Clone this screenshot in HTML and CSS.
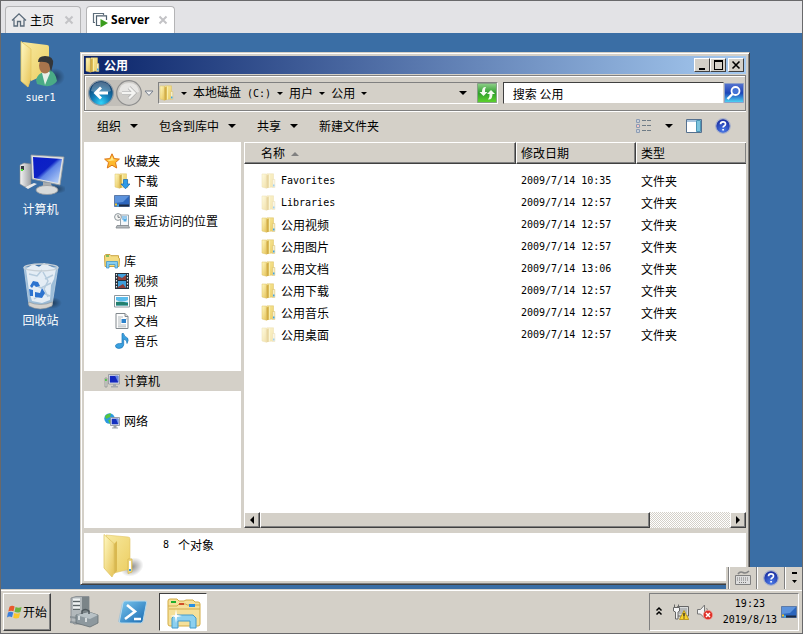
FILE: index.html
```html
<!DOCTYPE html>
<html lang="zh-CN">
<head>
    <meta charset="UTF-8">
    <meta name="viewport" content="width=device-width, initial-scale=1.0">
    <title>Server</title>
    <link rel="stylesheet" href="styles.css">
</head>
<body>
    <svg class="defs" aria-hidden="true">
        <defs>
            <linearGradient id="gold" x1="0" y1="0" x2="1" y2="1">
                <stop offset="0" stop-color="#fff9c4"/>
                <stop offset="1" stop-color="#e6c356"/>
            </linearGradient>
            <linearGradient id="goldDark" x1="0" y1="0" x2="1" y2="1">
                <stop offset="0" stop-color="#f7e9a0"/>
                <stop offset="1" stop-color="#ecce62"/>
            </linearGradient>
            <linearGradient id="screen" x1="0" y1="0" x2="1" y2="1">
                <stop offset="0" stop-color="#0a1cc8"/>
                <stop offset="0.45" stop-color="#0d22c4"/>
                <stop offset="0.55" stop-color="#5f86e6"/>
                <stop offset="1" stop-color="#c4dcfa"/>
            </linearGradient>
            <linearGradient id="silver" x1="0" y1="0" x2="1" y2="0">
                <stop offset="0" stop-color="#f4f4f4"/>
                <stop offset="1" stop-color="#9b9ea2"/>
            </linearGradient>
            <radialGradient id="shadow">
                <stop offset="0" stop-color="#000" stop-opacity=".45"/>
                <stop offset="1" stop-color="#000" stop-opacity="0"/>
            </radialGradient>
            <radialGradient id="backBlue" cx="0.5" cy="0.9" r="0.8">
                <stop offset="0" stop-color="#2fd4fa"/>
                <stop offset="0.45" stop-color="#1480ba"/>
                <stop offset="1" stop-color="#0c3a68"/>
            </radialGradient>
            <radialGradient id="helpBlue" cx="0.5" cy="0.8" r="0.8">
                <stop offset="0" stop-color="#4b7be8"/>
                <stop offset="1" stop-color="#14259a"/>
            </radialGradient>
            <linearGradient id="lens" x1="0" y1="0" x2="0" y2="1">
                <stop offset="0" stop-color="#5573cf"/>
                <stop offset="0.5" stop-color="#1c45b8"/>
                <stop offset="1" stop-color="#4fd8f6"/>
            </linearGradient>
            <linearGradient id="green" x1="0" y1="0" x2="0" y2="1">
                <stop offset="0" stop-color="#8fd08a"/>
                <stop offset="0.5" stop-color="#2f9e2c"/>
                <stop offset="1" stop-color="#5fd52c"/>
            </linearGradient>
            <linearGradient id="sky" x1="0" y1="0" x2="1" y2="1">
                <stop offset="0" stop-color="#7cc8ef"/>
                <stop offset="1" stop-color="#1567b0"/>
            </linearGradient>
        </defs>
        <symbol id="folder" viewBox="0 0 16 16">
            <path d="M6 .8h6.500V14L6 14.500z" fill="url(#goldDark)" stroke="#dcc063" stroke-width=".5"/>
            <path d="M1 1h4.500v14.200L1 14z" fill="url(#gold)" stroke="#dcc063" stroke-width=".5"/>
            <path d="M5.500 2.500 8 1.500v13l-2.500 1z" fill="#d3ae45"/>
            <path d="M8.300 1.500V14.500" stroke="#fbf2b4" stroke-width="1"/>
            <path d="M11.500 6.500h2.300v8h-2.300z" fill="#f6efc8" stroke="#d8bd66" stroke-width=".5"/>
            <path d="M12 11.500h1.500v2H12z" fill="#3fa4e4"/>
        </symbol>
        <symbol id="bigfolder" viewBox="0 0 48 48">
            <ellipse cx="36" cy="34" rx="12" ry="9" fill="url(#shadow)" transform="rotate(-25 36 34)"/>
            <path d="m10 2 22 2q2 0 2 2v30l-16 4z" fill="url(#goldDark)" stroke="#e0c566" stroke-width=".6"/>
            <path d="m18 11 3-3v30l-3 3z" fill="#d9b850"/>
            <path d="m8 1.500 10 9V40l-2 4-8-9z" fill="url(#gold)" stroke="#e0c566" stroke-width=".8"/>
            <path d="M32 26h4v13l-4 1.500z" fill="#f0dc8c" stroke="#d9b94e" stroke-width=".8"/>
            <path d="M33 28h2v8h-2z" fill="#fff"/>
            <path d="M33 36h2v2h-2z" fill="#3b9be0"/>
        </symbol>
        <symbol id="pc" viewBox="0 0 48 48">
            <ellipse cx="38" cy="38" rx="12" ry="5" fill="url(#shadow)"/>
            <path d="m3 14 4-2 7 1v21l-6 2-5-3z" fill="url(#silver)" stroke="#85898d" stroke-width=".6"/>
            <path d="M4 15h3v4H4z" fill="#33383d"/>
            <path d="M4 18h2v2H4z" fill="#4be535"/>
            <path d="m8 36 9-4 3 1-9 5z" fill="#e9e9e9"/>
            <path d="m14 4 33 2-4 28-28-6z" fill="#dfe2e2" stroke="#94999d" stroke-width=".8"/>
            <path d="m16 6 29 2-4 24-24-5z" fill="url(#screen)"/>
            <path d="m26 31 8 1 1 5h-9z" fill="#a9acae"/>
            <ellipse cx="30" cy="39" rx="11" ry="4.500" fill="#d8dada" stroke="#989b9d" stroke-width=".8"/>
        </symbol>
        <symbol id="smallpc" viewBox="0 0 16 16">
            <path d="M1 5h2v9H1z" fill="#d6d9d4" stroke="#868b86" stroke-width=".7"/>
            <path d="M1.200 6h1.500v2H1.200z" fill="#38c832"/>
            <path d="M4.500 1.500h11v9.500h-11z" fill="#e6e8ec" stroke="#8b9096" stroke-width=".8"/>
            <path d="M5.800 2.800h8.500v6.800H5.800z" fill="#1428be"/>
            <path d="m11 2.800 3.300 0v6.800z" fill="#6686df"/>
            <path d="M9 11h3v2H9zM7 13h7v1.500H7z" fill="#a4a8ad"/>
        </symbol>
        <symbol id="desktop" viewBox="0 0 16 16">
            <path d="M.5 2.500h15v11H.5z" fill="#2c66bd" stroke="#5d7ba8"/>
            <path d="M1 3h14l-6 6-8 1z" fill="#5d93dc"/>
            <path d="M5 11.500h10v2H5z" fill="#1c2b42"/>
            <path d="M1 10.500h2v2H1z" fill="#efc52f"/>
            <path d="M3 11.500h2v2H3z" fill="#3fa7e8"/>
        </symbol>
        <symbol id="help" viewBox="0 0 16 16">
            <circle cx="8" cy="8" r="7.300" fill="url(#helpBlue)" stroke="#a9b2cc" stroke-width="1.200"/>
            <path d="M5.500 6.300Q5.600 3.900 8 3.900q2.500 0 2.500 2.100 0 1.300-1.400 2-1 .6-1 1.600M8.100 11v1.600" fill="none" stroke="#fff" stroke-width="1.700"/>
        </symbol>
        <symbol id="close" viewBox="0 0 10 10">
            <path d="m1.500 1.500 7 7m0-7-7 7" stroke="#c3c3c6" stroke-width="2"/>
        </symbol>
    </svg>

    <div class="tabs">
        <div class="tab">
            <svg class="i16" viewBox="0 0 16 16"><path d="M1 8.500 8 1.800l7 6.700M3 7.500V14h3.500V9.500h3V14H13V7.500" fill="none" stroke="#5b6b7a" stroke-width="1.300"/></svg>
            <span>主页</span>
            <button class="tab-close" aria-label="关闭主页"><svg class="i10"><use href="#close"/></svg></button>
        </div>
        <div class="tab active">
            <svg class="i16" viewBox="0 0 16 16"><path d="M3 10.500H1.500v-9h10V3" fill="none" stroke="#5f6f7c" stroke-width="1.200"/><path d="M14.500 8V3.800h-10v9.700H8" fill="none" stroke="#4e5f6d" stroke-width="1.200"/><path d="M8.500 7v8.500L16 11z" fill="#3a9c1c"/></svg>
            <span>Server</span>
            <button class="tab-close" aria-label="关闭 Server"><svg class="i10"><use href="#close"/></svg></button>
        </div>
    </div>

    <div class="desktop">
        <div class="shortcuts">
            <a class="shortcut" href="#">
                <svg class="i48" viewBox="0 0 48 48">
                    <ellipse cx="38" cy="37" rx="10" ry="9" fill="url(#shadow)"/>
                    <path d="m6 2 24 3q2 0 2 2v26l-18 8z" fill="url(#goldDark)"/>
                    <path d="M4 1.500 14 9v29l-3 9-7-6z" fill="url(#gold)" stroke="#e5c862" stroke-width=".8"/>
                    <path d="m20 44-1-4q2-7 8-8l6-2q6 3 7 11-4 6-12 5z" fill="#4aab86"/>
                    <path d="m25 33 3 12 5-12-2-3h-5z" fill="#e6efe8"/>
                    <ellipse cx="28" cy="25.500" rx="6" ry="8" fill="#a8744c"/>
                    <path d="M21 22q0-6 7-6 9 0 8 8l-2 8-2-8q-3-3-11-2z" fill="#343638"/>
                </svg>
                <span class="latin">suer1</span>
            </a>
            <a class="shortcut" href="#">
                <svg class="i48"><use href="#pc"/></svg>
                <span>计算机</span>
            </a>
            <a class="shortcut" href="#">
                <svg class="i48" viewBox="0 0 48 48">
                    <ellipse cx="35" cy="41" rx="10" ry="6" fill="url(#shadow)"/>
                    <path d="m7 5 5 38q11 6 23 0l6-38z" fill="#aecbe2" opacity=".85" stroke="#d5e3ed" stroke-width=".8"/>
                    <path d="m9 7 7-5 6 3 5-4 12 6-2 10-3 6-1 15-8 3-10-2-3-10z" fill="#e4edf5"/>
                    <path d="m12 12 8 2 5-6m3 9 8-4m-20 9 8 4 10-5m-17 16 9-6 7 3M26 10l5 9-4 8 4 8" fill="none" stroke="#b5cbdd" stroke-width="1.500"/>
                    <ellipse cx="24" cy="5.500" rx="17" ry="3.500" fill="none" stroke="#c8d0d6" stroke-width="1.300"/>
                    <path d="m13 24 3-5 5 1 2 4-4 1-2-2-2 3zM12 27l4 1 0 6-3 0zM18 30l5 1 2-5 3 5-3 5-7-1z" fill="#2c73cf"/>
                    <path d="m11.500 40 .5 4q11 6 23 0l.5-4q-12 5-24 0z" fill="#d3d1cd" stroke="#8f9396" stroke-width=".6"/>
                </svg>
                <span>回收站</span>
            </a>
        </div>

        <div class="window">
            <div class="titlebar">
                <svg class="i16"><use href="#folder"/></svg>
                <h1>公用</h1>
                <div class="controls">
                    <button class="ctl" aria-label="最小化"><svg class="i12" viewBox="0 0 12 12"><path d="M3 9h6v2H3z"/></svg></button>
                    <button class="ctl" aria-label="最大化"><svg class="i12" viewBox="0 0 12 12"><path d="M2 1h9v10H2zM3 3v7h7V3z" fill-rule="evenodd"/></svg></button>
                    <button class="ctl last" aria-label="关闭"><svg class="i12" viewBox="0 0 12 12"><path d="m2.500 2.500 7 7m0-7-7 7" stroke="#000" stroke-width="1.600"/></svg></button>
                </div>
            </div>

            <div class="navbar">
                <div class="history">
                    <button aria-label="后退"><svg class="i26" viewBox="0 0 26 26"><circle cx="13" cy="13" r="12.300" fill="url(#backBlue)" stroke="#8d99a5" stroke-width="1.200"/><path d="M3 11q1-9 10-9t10 9q-9 4-20 0z" fill="#fff" opacity=".28"/><path d="M20 13H8m5-5.500L7.500 13l5.500 5.500" fill="none" stroke="#fff" stroke-width="2.800"/></svg></button>
                    <button aria-label="前进"><svg class="i26" viewBox="0 0 26 26"><circle cx="13" cy="13" r="12.300" fill="#cfcdc9" stroke="#8e8e8e" stroke-width="1.200"/><path d="M3 12q1-9 10-9t10 9q-9 3-20 0z" fill="#fff" opacity=".5"/><path d="M6 13h12m-5-5.500 5.500 5.500-5.500 5.500" fill="none" stroke="#aaa" stroke-width="3.600"/><path d="M6 13h12m-5-5.500 5.500 5.500-5.500 5.500" fill="none" stroke="#f4f4f2" stroke-width="2.400"/></svg></button>
                    <button aria-label="最近浏览"><svg class="i10" viewBox="0 0 10 10"><path d="M1 3h8L5 7.500z" fill="#f1f1f1" stroke="#777f8c"/></svg></button>
                </div>
                <div class="address">
                    <svg class="i16"><use href="#folder"/></svg>
                    <nav class="crumbs">
                        <i class="arrow small"></i>
                        <a href="#">本地磁盘<span class="latin drive">(C:)</span></a>
                        <i class="arrow small"></i>
                        <a href="#">用户</a>
                        <i class="arrow small"></i>
                        <a href="#">公用</a>
                        <i class="arrow small"></i>
                    </nav>
                    <button class="history-list" aria-label="以前的位置"><i class="arrow"></i></button>
                    <button class="refresh" aria-label="刷新"><svg class="i20" viewBox="0 0 20 20"><path d="M.5.5h19v19H.5z" fill="url(#green)" stroke="#86a286"/><path d="M9 4Q5 3.500 5 9H2.500L6.500 13l4-4H8q-.5-3 1-5zM11 16.500q4.500.5 4.500-5.500H18l-4-4-4 4h2.500q.5 3-1.500 5.500z" fill="#f5fbf2"/></svg></button>
                </div>
                <form class="search">
                    <input type="text" aria-label="搜索" placeholder="搜索 公用">
                    <button type="button" aria-label="开始搜索"><svg class="i20" viewBox="0 0 20 20"><path d="M.5.5h19v19H.5z" fill="url(#lens)" stroke="#8ea0c8"/><circle cx="11.500" cy="8" r="4" fill="#4473d6" stroke="#fff" stroke-width="1.800"/><path d="m8.500 11-5 5" stroke="#fff" stroke-width="2.400"/></svg></button>
                </form>
            </div>

            <div class="toolbar">
                <button>组织<i class="arrow"></i></button>
                <button>包含到库中<i class="arrow"></i></button>
                <button>共享<i class="arrow"></i></button>
                <button>新建文件夹</button>
                <div class="view-tools">
                    <button aria-label="更改视图"><svg class="i16" viewBox="0 0 16 16"><path d="M.5 1.500h3v3h-3zM.5 6.500h3v3h-3zM.5 11.500h3v3h-3z" fill="#fff" stroke="#8c9cb4"/><path d="M1.500 2.500h1v1h-1zM1.500 12.500h1v1h-1z" fill="#346"/><path d="M1.500 7.500h1v1h-1z" fill="#d22"/><path d="M6 2.500h4M11 2.500h4M6 7.500h4M11 7.500h4M6 12.500h4M11 12.500h4" stroke="#6f7c86"/></svg></button>
                    <button aria-label="更多选项"><i class="arrow"></i></button>
                    <button aria-label="显示预览窗格"><svg class="i16" viewBox="0 0 16 16"><path d="M.5 1.500h15v13H.5z" fill="#fff" stroke="#55708f"/><path d="M1 2h9v2H1z" fill="#a9c4de"/><path d="M10.500 2.500h4v11h-4z" fill="#7cc3dc" stroke="#4b95b5"/></svg></button>
                    <button aria-label="获取帮助"><svg class="i16"><use href="#help"/></svg></button>
                </div>
            </div>

            <div class="panes">
                <nav class="tree">
                    <ul>
                        <li><a href="#"><svg class="i16" viewBox="0 0 16 16"><path d="m8 .8 2.200 4.800 5.200.5-3.900 3.500 1.200 5.400L8 12.200 3.300 15l1.200-5.400L.6 6.100l5.200-.5z" fill="#fdb92d" stroke="#dd7618"/><path d="m8 3 1.300 3.500 3 .5-7 1L3 7l3.500-.5z" fill="#ffe98a"/></svg>收藏夹</a></li>
                        <li class="child"><a href="#"><svg class="i16"><use href="#folder"/><path d="M9.500 6.500h4V11H16l-4.500 4.800L7 11h2.500z" fill="#2f9be8" stroke="#1267b6" stroke-width=".7"/></svg>下载</a></li>
                        <li class="child"><a href="#"><svg class="i16"><use href="#desktop"/></svg>桌面</a></li>
                        <li class="child"><a href="#"><svg class="i16" viewBox="0 0 16 16"><path d="M6.500 2h8v11h-8z" fill="#f4f7fa" stroke="#98a4ac"/><path d="M8 4h5M8 6h2M12 6h1" stroke="#3c9bdf"/><path d="M9.500 5.500h3v3h-3z" fill="#56aee4"/><path d="M3 12.500h11.500l1 2.500H2z" fill="#b7bcbf" stroke="#80878b" stroke-width=".8"/><circle cx="4" cy="4" r="3.400" fill="#f6f6f4" stroke="#8d969c"/><path d="M4 2v2.300h2" fill="none" stroke="#586269" stroke-width=".8"/></svg>最近访问的位置</a></li>
                    </ul>
                    <ul>
                        <li><a href="#"><svg class="i16" viewBox="0 0 16 16"><path d="M.5 2.500 2 1.500h4l1 1.200h7.500V5l1 .5-.5 8H1z" fill="#f4dc82" stroke="#c9a342"/><path d="M2 3h3" stroke="#35aa4a" stroke-width="1.200"/><path d="M2.500 15V8.500h11V15H11v-3.500H5V15z" fill="#86cdf1" stroke="#3f96cc" stroke-width=".8"/></svg>库</a></li>
                        <li class="child"><a href="#"><svg class="i16" viewBox="0 0 16 16"><path d="M1 0h14v16H1z" fill="#26303a"/><path d="M4 1h8v6H4zM4 8h8v7H4z" fill="#3f9fdc"/><path d="m4 3 4 2 4-3v5H4zM4 14l5-3 3 4H4z" fill="#8e3f3a"/><path d="M2.500 1v14M13.500 1v14" stroke="#e6e9eb" stroke-width="1.200" stroke-dasharray="1.500 1.500"/></svg>视频</a></li>
                        <li class="child"><a href="#"><svg class="i16" viewBox="0 0 16 16"><path d="M.5 2.500h15v11.500H.5z" fill="#fff" stroke="#8d979e"/><path d="M2 4h12v8.500H2z" fill="#5bbcec"/><path d="M2 7q6 3 12 0v2H2z" fill="#dff2f7"/><path d="M2 9q6-1 12 1v2.500H2z" fill="#23806f"/></svg>图片</a></li>
                        <li class="child"><a href="#"><svg class="i16" viewBox="0 0 16 16"><path d="M2 .5h9l3 3v12H2z" fill="#fdfdfd" stroke="#82898e"/><path d="M11 .5v3h3" fill="#ddd" stroke="#82898e"/><path d="M4 4h5M4 6h3M4 8h3M4 10h3M4 12h8M12 6h1M4 13.800h8" stroke="#a0a8ad" stroke-width=".8"/><path d="M7.500 6h4.500v4H7.500z" fill="#2d82cb"/></svg>文档</a></li>
                        <li class="child"><a href="#"><svg class="i16" viewBox="0 0 16 16"><path d="M8 .5h1.500q.5 3 4 4.500 1.500 2-.5 5.500.3-3.500-3.300-4.500V12q-.7 3.500-5 3.500Q1 15 1.500 12.500 2.500 10 8 10.500z" fill="#3aa0df" stroke="#1b76b8" stroke-width=".7"/></svg>音乐</a></li>
                    </ul>
                    <ul>
                        <li class="selected"><a href="#"><svg class="i16"><use href="#smallpc"/></svg>计算机</a></li>
                    </ul>
                    <ul>
                        <li><a href="#"><svg class="i16" viewBox="0 0 16 16"><circle cx="5.500" cy="5.500" r="5.200" fill="#2a9ae0"/><path d="M1 3q3-3 6-2.500L6 4 2 6zM4 7l4-1 1 3-3 2z" fill="#56c53e"/><path d="M6.500 4.500h9v8h-9z" fill="#e4e8ee" stroke="#858d97" stroke-width=".8"/><path d="M7.700 5.700h6.600v5.600H7.700z" fill="#1530bf"/><path d="M12 5.700h2.300v5.600z" fill="#6d94e7"/><path d="M9.500 13h3v1.500h-3zM8 14.500h6v1H8z" fill="#9ba1a8"/></svg>网络</a></li>
                    </ul>
                </nav>

                <div class="files">
                    <table>
                        <thead>
                            <tr>
                                <th>名称<i class="sort"></i></th>
                                <th class="date">修改日期</th>
                                <th class="type">类型</th>
                            </tr>
                        </thead>
                        <tbody>
                            <tr><td><svg class="i16 hidden-item"><use href="#folder"/></svg><span class="latin">Favorites</span></td><td class="latin">2009/7/14 10:35</td><td>文件夹</td></tr>
                            <tr><td><svg class="i16 hidden-item"><use href="#folder"/></svg><span class="latin">Libraries</span></td><td class="latin">2009/7/14 12:57</td><td>文件夹</td></tr>
                            <tr><td><svg class="i16"><use href="#folder"/></svg>公用视频</td><td class="latin">2009/7/14 12:57</td><td>文件夹</td></tr>
                            <tr><td><svg class="i16"><use href="#folder"/></svg>公用图片</td><td class="latin">2009/7/14 12:57</td><td>文件夹</td></tr>
                            <tr><td><svg class="i16"><use href="#folder"/></svg>公用文档</td><td class="latin">2009/7/14 13:06</td><td>文件夹</td></tr>
                            <tr><td><svg class="i16"><use href="#folder"/></svg>公用下载</td><td class="latin">2009/7/14 12:57</td><td>文件夹</td></tr>
                            <tr><td><svg class="i16"><use href="#folder"/></svg>公用音乐</td><td class="latin">2009/7/14 12:57</td><td>文件夹</td></tr>
                            <tr><td><svg class="i16 hidden-item"><use href="#folder"/></svg>公用桌面</td><td class="latin">2009/7/14 12:57</td><td>文件夹</td></tr>
                        </tbody>
                    </table>
                    <div class="scrollbar">
                        <button aria-label="向左滚动"><i class="arrow left"></i></button>
                        <div class="track"><div class="thumb"></div></div>
                        <button aria-label="向右滚动"><i class="arrow right"></i></button>
                    </div>
                </div>
            </div>

            <div class="details">
                <svg class="i48"><use href="#bigfolder"/></svg>
                <p><span class="latin">8</span>个对象</p>
            </div>
        </div>

        <div class="langbar">
            <button aria-label="键盘"><svg class="i16" viewBox="0 0 16 16"><path d="M3 4q2-3 5-1.500T14 1" fill="none" stroke="#858585" stroke-width="1.600"/><path d="M.5 5.500h15v9H.5z" fill="#ddd" stroke="#808080"/><path d="M2 8h12M2 10h12M4 12.500h8" stroke="#777" stroke-dasharray="1 1"/></svg></button>
            <button aria-label="帮助"><svg class="i16"><use href="#help"/></svg></button>
            <button class="options" aria-label="选项"><svg class="i16" viewBox="0 0 16 16"><path d="M6 2h5v2H6zM6 10h5l-2.500 3z"/></svg></button>
        </div>
    </div>

    <div class="taskbar">
        <button class="start">
            <svg class="i16" viewBox="0 0 16 16"><path d="M2.500 2.800Q5 1 7.600 2.500L6.500 7.300Q4 6 1.300 7.500z" fill="#e9592c"/><path d="M8.600 3q2.800 1.500 6 0l-1.200 4.900q-3 1.400-5.900-.1z" fill="#6eb43e"/><path d="M1 8.600q2.700-1.500 5.200-.1L5 13.300q-2.500-1.400-5 .1z" fill="#3a7edb"/><path d="M7.300 9q2.900 1.400 5.800.1L12 13.800q-3 1.500-5.800 0z" fill="#fbc62c"/></svg>
            <span>开始</span>
        </button>
        <button class="task" aria-label="服务器管理器">
            <svg class="i32" viewBox="0 0 32 32"><path d="m2 2 5-1.500H20V22l-8 6H5l-3-3z" fill="#b2b8bb" stroke="#80878b" stroke-width=".8"/><path d="M13 1h7v21l-7 4z" fill="#7b8488"/><path d="M4 3.500h7M4 7.500h7M4 11.500h7" stroke="#eef1f2" stroke-width="2"/><path d="M4 5.500h7M4 9.500h7M4 13.500h7" stroke="#5b6468"/><path d="m1 20 8 1v2l-8-1zM1 25l7 1v2l-7-1z" fill="#8b9398"/><path d="m7 19 13-3 9 3v8l-8 4-14-4z" fill="#8d989e" stroke="#656e73" stroke-width=".8"/><path d="m7 19 14 4 8-4-9-3z" fill="#b9c2c6"/><path d="M13 18v-3q3-3 7 0v3" fill="none" stroke="#4d565b" stroke-width="1.500"/><path d="M10 20v4M17 22v4" stroke="#edf0f1" stroke-width="1.500"/></svg>
        </button>
        <button class="task" aria-label="PowerShell">
            <svg class="i32" viewBox="0 0 32 32"><path d="m1 26 4-19 3 18z" fill="#88b9da" opacity=".6"/><path d="M8 5h20q2 0 1.500 2L26 25q-.5 2-2.500 2H4q-2 0-1.500-2L6 7q.5-2 2-2z" fill="url(#sky)" stroke="#b4d8ec"/><path d="m10 9 8 6.500L8 23M17 23h7" fill="none" stroke="#fff" stroke-width="2.600"/></svg>
        </button>
        <button class="task pressed" aria-label="公用">
            <svg class="i36" viewBox="0 0 36 36"><path d="M3 7q0-2 2-2h7l2 2h5l2-1h7l2 2h3q2 0 2 2v20q0 2-2 2H5q-2 0-2-2z" fill="#f5e09a" stroke="#d3ac45"/><path d="M3 12h9l2-2h7l1 1h13M4 15h31" fill="none" stroke="#d3ad4c"/><path d="M6 7h5v2H6z" fill="#1fae2c"/><path d="M14 9h5v2h-5z" fill="#d14e29"/><path d="M24 10h6v3h-6z" fill="#2b8fe0"/><path d="M7 34V24l3-3h18l3 3v10h-6v-7H13v7z" fill="#8dd0ef" stroke="#459bca"/><path d="m11 15 1 6 5 1-5 1-1 6-1-6-5-1 5-1z" fill="#fff"/></svg>
        </button>
        <div class="tray">
            <button aria-label="显示隐藏的图标"><svg class="i12" viewBox="0 0 12 12"><path d="m3.500 4.500 2.500-2.500 2.500 2.500M3.500 8.500 6 6l2.500 2.500" fill="none" stroke="#000" stroke-width="1.500"/></svg></button>
            <svg class="i16" viewBox="0 0 16 16"><path d="M4.500 2.500h11v9.500h-11z" fill="#d9dbdc" stroke="#666"/><path d="M6 4h8v6H6z" fill="#b5b8ba"/><path d="M1.500.5v3M5.500.5v3M.5 3.500h6V7l-1.500 1v7H2.500V8L.5 7z" fill="#f6f6f6" stroke="#666"/><path d="m11 6.500 4.800 9H6.500z" fill="#fbd42c" stroke="#b28e10" stroke-width=".8"/><path d="M11 9v3.500M11 13.500v1" stroke="#222" stroke-width="1.300"/></svg>
            <svg class="i16" viewBox="0 0 16 16"><path d="M.5 5.500h3l4-4.500v13l-4-4h-3z" fill="#f3f3f3" stroke="#777"/><path d="M9.500 4q1.500 2 1 4" fill="none" stroke="#888"/><circle cx="11" cy="11" r="4.700" fill="#df3028" stroke="#f0aaa5" stroke-width=".7"/><path d="m9 9 4 4m0-4-4 4" stroke="#fff" stroke-width="1.500"/></svg>
            <div class="clock latin"><time>19:23</time><time>2019/8/13</time></div>
            <button aria-label="显示桌面"><svg class="i16"><use href="#desktop"/></svg></button>
        </div>
    </div>
</body>
</html>
```
FILE: styles.css
```css
* {
    box-sizing: border-box;
}
body {
    margin: 0;
    min-height: 100vh;
    display: flex;
    flex-direction: column;
    border: 1px solid #69696b;
    font-family: "Noto Sans CJK SC", sans-serif;
    font-size: 12px;
    line-height: 14px;
    color: #000;
    background: #d4d0c8;
}
button {
    display: flex;
    align-items: center;
    justify-content: center;
    padding: 0;
    border: none;
    background: none;
    font: inherit;
    color: inherit;
}
a {
    color: inherit;
    text-decoration: none;
}
svg {
    display: block;
    flex: none;
}
.defs {
    position: absolute;
    width: 0;
    height: 0;
}
.latin {
    font-family: "DejaVu Sans Mono", monospace;
    font-size: 10px;
}
.i10 { width: 10px; height: 10px; }
.i12 { width: 12px; height: 12px; }
.i16 { width: 16px; height: 16px; }
.i20 { width: 20px; height: 20px; }
.i26 { width: 26px; height: 26px; }
.i32 { width: 32px; height: 32px; }
.i36 { width: 36px; height: 36px; }
.i48 { width: 48px; height: 48px; }

/* small black triangles */
.arrow {
    border: 4px solid transparent;
    border-top-color: #000;
    border-bottom: none;
}
.arrow.small {
    border-width: 3px;
    border-bottom: none;
}
.arrow.left {
    border: 4px solid transparent;
    border-right-color: #000;
    border-left: none;
}
.arrow.right {
    border: 4px solid transparent;
    border-left-color: #000;
    border-right: none;
}

/* tabs */
.tabs {
    display: flex;
    align-items: flex-end;
    gap: 5px;
    height: 32px;
    padding-left: 4px;
    background: #e3e3e6;
}
.tab {
    display: flex;
    align-items: center;
    gap: 3px;
    height: 27px;
    padding: 0 6px 0 5px;
    border: 1px solid #b4b4b6;
    border-bottom: none;
    border-radius: 4px 4px 0 0;
    background: #ebebed;
}
.tab.active {
    background: #fff;
    font-family: "Open Sans", sans-serif;
    font-weight: bold;
}
.tab-close {
    margin-left: 7px;
}
.tab.active .tab-close {
    margin-left: 5px;
}

/* desktop */
.desktop {
    position: relative;
    flex: 1;
    background: #3a6ea5;
}
.shortcuts {
    display: flex;
    flex-direction: column;
    gap: 46px;
    width: 79px;
    padding-top: 7px;
}
.shortcut {
    display: flex;
    flex-direction: column;
    align-items: center;
    gap: 3px;
    color: #fff;
}

/* explorer window */
.window {
    position: absolute;
    top: 19px;
    right: 52px;
    bottom: 4px;
    left: 79px;
    display: flex;
    flex-direction: column;
    padding: 3px;
    border: 1px solid;
    border-color: #d4d0c8 #404040 #404040 #d4d0c8;
    box-shadow: inset 1px 1px #fff, inset -1px -1px #808080;
    background: #d4d0c8;
}
.titlebar {
    display: flex;
    align-items: center;
    gap: 3px;
    height: 18px;
    padding: 0 2px 0 1px;
    background: linear-gradient(to right, #0a246a, #a6caf0);
    color: #fff;
}
.titlebar h1 {
    margin: 0;
    font-size: 12px;
}
.controls {
    display: flex;
    margin-left: auto;
}
.ctl {
    width: 16px;
    height: 14px;
    border: 1px solid;
    border-color: #fff #404040 #404040 #fff;
    background: #d4d0c8;
}
.ctl.last {
    margin-left: 2px;
}
.navbar {
    display: flex;
    align-items: center;
    height: 36px;
    margin-top: 1px;
    padding: 0 1px 0 3px;
    border: 1px solid #808080;
    box-shadow: inset 1px 1px #fff, 0 1px #fff;
}
.history {
    display: flex;
    align-items: center;
    gap: 2px;
    margin-right: 4px;
    border-radius: 13px;
    background: linear-gradient(to right, #c2bfb9 41px, #d4d0c8 41px);
}
.address {
    flex: 7;
    display: flex;
    align-items: center;
    height: 22px;
    border: 1px solid;
    border-color: #808080 #fff #fff #808080;
}
.crumbs {
    display: flex;
    align-items: center;
    gap: 6px;
    margin-left: 6px;
}
.drive {
    margin-left: 6px;
}
.history-list {
    margin-left: auto;
    width: 24px;
    height: 20px;
}
.refresh {
    margin-left: 2px;
}
.search {
    flex: 5;
    display: flex;
    align-items: center;
    margin: 0 0 0 5px;
}
.search input {
    flex: 1;
    min-width: 0;
    height: 22px;
    padding: 0 9px;
    border: 1px solid;
    border-color: #404040 #d4d0c8 #d4d0c8 #404040;
    background: #fff;
    font: inherit;
}
.search input::placeholder {
    color: #000;
}
.toolbar {
    display: flex;
    align-items: center;
    gap: 21px;
    height: 31px;
    padding: 0 15px 2px 13px;
}
.toolbar button {
    gap: 9px;
}
.view-tools {
    display: flex;
    gap: 13px;
    margin-left: auto;
}
.panes {
    flex: 1;
    display: flex;
    gap: 3px;
}
.tree {
    width: 157px;
    padding-top: 9px;
    background: #fff;
}
.tree ul {
    margin: 0 0 20px;
    padding: 0;
    list-style: none;
}
.tree a {
    display: flex;
    align-items: center;
    gap: 4px;
    height: 20px;
    padding-left: 20px;
}
.tree .child a {
    padding-left: 30px;
}
.tree .selected {
    background: #d4d0c8;
}
.files {
    flex: 1;
    display: flex;
    flex-direction: column;
    justify-content: space-between;
    background: #fff;
}
table {
    width: 100%;
    table-layout: fixed;
    border-collapse: separate;
    border-spacing: 0;
}
th {
    height: 22px;
    padding: 0 0 0 4px;
    border: 1px solid;
    border-color: #fff #404040 #404040 #fff;
    box-shadow: inset -1px -1px #808080;
    background: #d4d0c8;
    font-weight: normal;
    text-align: left;
}
th:first-child {
    padding-left: 16px;
}
.date {
    width: 120px;
}
.type {
    width: 110px;
    border-right: none;
}
.sort {
    display: inline-block;
    margin: 0 0 2px 6px;
    border: 4px solid transparent;
    border-top: none;
    border-bottom-color: #808080;
}
tbody::before {
    content: "";
    display: block;
    height: 6px;
}
td {
    height: 22px;
    padding: 0 0 0 5px;
}
td:first-child {
    display: flex;
    align-items: center;
    gap: 4px;
    padding-left: 17px;
}
.hidden-item {
    opacity: 0.5;
}
.scrollbar {
    display: flex;
    height: 16px;
}
.scrollbar button,
.thumb {
    width: 16px;
    border: 1px solid;
    border-color: #fff #404040 #404040 #fff;
    box-shadow: inset -1px -1px #808080;
    background: #d4d0c8;
}
.track {
    flex: 1;
    display: flex;
    background: repeating-conic-gradient(#fff 0 25%, #d4d0c8 0 50%) 0 0 / 2px 2px;
}
.track .thumb {
    width: 83%;
}
.details {
    display: flex;
    gap: 19px;
    height: 48px;
    margin-top: 5px;
    padding-left: 12px;
    background: #fff;
}
.details p {
    display: flex;
    gap: 9px;
    margin: 5px 0;
}

/* language bar */
.langbar {
    position: absolute;
    right: 0;
    bottom: 0;
    display: flex;
    height: 22px;
    padding-left: 2px;
    background: #d4d0c8;
}
.langbar button {
    width: 28px;
    border-left: 1px solid #808080;
    box-shadow: inset 1px 0 #fff;
}
.langbar .options {
    width: 18px;
}

/* taskbar */
.taskbar {
    display: flex;
    align-items: center;
    height: 44px;
    padding: 2px 3px 0 2px;
    box-shadow: inset 0 1px #d4d0c8, inset 0 2px #fff;
}
.start {
    width: 48px;
    height: 38px;
    margin-right: 10px;
    border: 1px solid;
    border-color: #fff #404040 #404040 #fff;
    box-shadow: inset -1px -1px #808080;
}
.task {
    width: 48px;
    height: 38px;
}
.pressed {
    margin-left: 2px;
    border: 1px solid;
    border-color: #404040 #fff #fff #404040;
    background: #fff;
}
.tray {
    display: flex;
    align-items: center;
    gap: 8px;
    height: 38px;
    margin-left: auto;
    padding: 0 1px 0 3px;
    border: 1px solid;
    border-color: #808080 #fff #fff #808080;
}
.clock {
    display: flex;
    flex-direction: column;
    align-items: center;
    gap: 2px;
    margin: 0 -4px 0 2px;
}
```
